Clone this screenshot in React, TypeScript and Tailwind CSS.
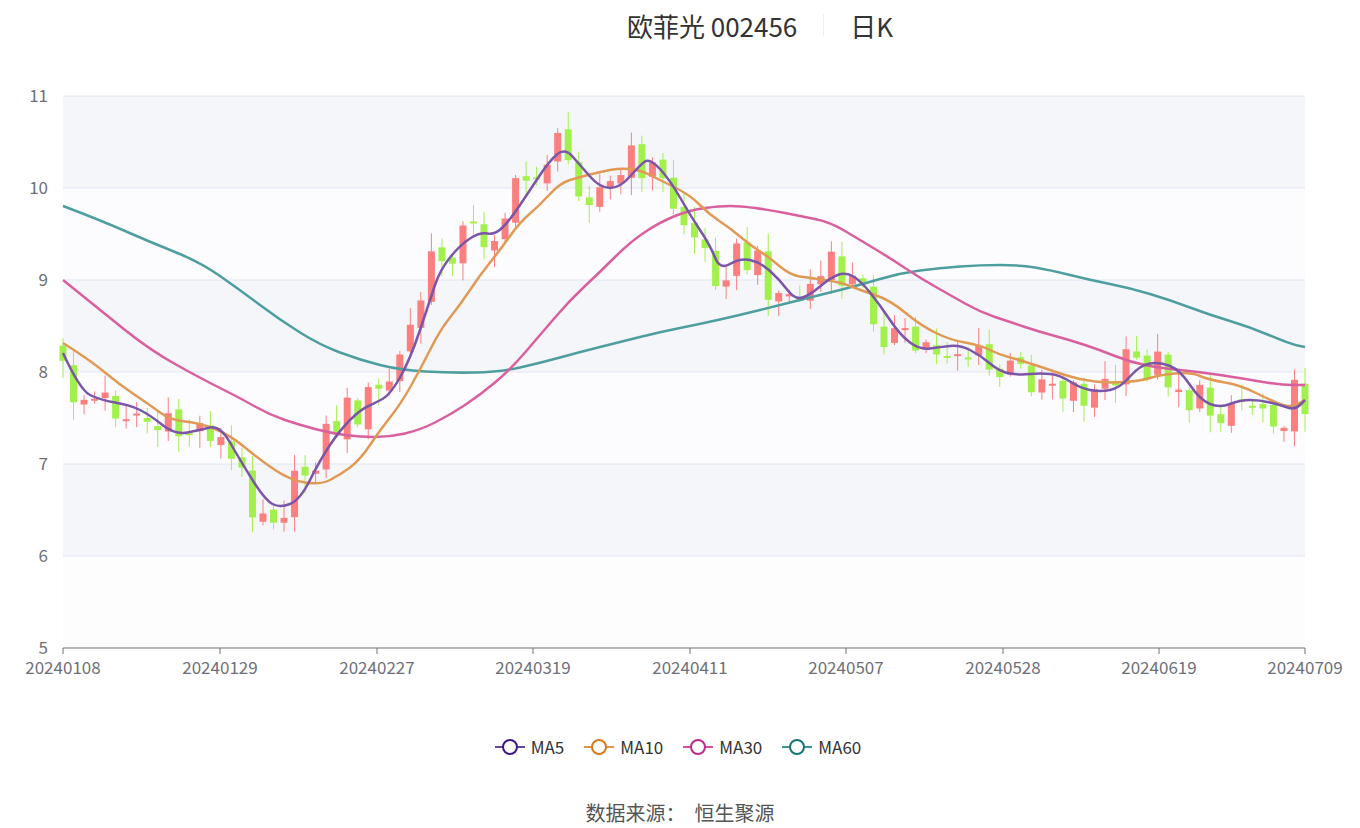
import React from "react";

type P = [number, number];
const ma5: P[] = [[63,353],[80,390],[100,400],[130,405],[150,415],[175,435],[200,430],[220,425],[240,460],[265,500],[280,508],[300,500],[320,460],[340,430],[360,410],[375,403],[390,395],[410,360],[430,300],[440,270],[460,245],[480,232],[495,235],[510,220],[530,190],[550,160],[565,148],[580,165],[600,188],[620,188],[640,165],[650,158],[670,180],[690,215],[710,245],[720,270],[740,258],[760,262],[780,280],[795,300],[810,295],[830,278],[845,272],[860,280],[880,305],[900,335],[920,350],[940,347],[960,345],[980,355],[1000,372],[1020,375],[1040,373],[1060,375],[1080,388],[1100,392],[1120,388],[1140,365],[1160,362],[1180,370],[1200,400],[1220,408],[1240,400],[1260,400],[1280,405],[1295,410],[1305,400]];
const ma10: P[] = [[63,343],[90,360],[120,385],[150,405],[170,420],[200,423],[230,435],[260,460],[290,480],[320,485],[340,475],[360,460],[380,430],[400,405],[420,370],[440,330],[460,305],[480,275],[500,250],[520,222],[540,205],[560,183],[580,177],[600,172],[620,168],[640,170],[660,180],[690,195],[710,215],[730,228],[750,245],[770,258],[790,275],[810,278],[840,282],[860,290],[890,300],[920,325],[950,340],[980,345],[1000,355],[1020,360],[1050,370],[1080,380],[1110,383],[1140,381],[1160,375],[1190,372],[1210,380],[1240,385],[1270,400],[1290,408],[1305,400]];
const ma30: P[] = [[63,280],[100,310],[150,350],[200,378],[240,398],[270,415],[300,425],[330,433],[360,437],[390,437],[420,430],[450,415],[480,395],[510,370],[540,335],[570,300],[600,272],[630,242],[660,222],[690,210],[720,206],[740,206],[770,210],[800,216],[830,222],[860,240],[890,258],[920,278],[950,295],[980,312],[1010,322],[1040,332],[1070,340],[1100,350],[1130,362],[1160,368],[1200,372],[1240,378],[1280,385],[1305,385]];
const ma60: P[] = [[63,206],[100,220],[150,242],[200,262],[240,290],[280,320],[320,345],[360,360],[400,370],[450,373],[500,372],[540,363],[580,352],[620,342],[660,332],[700,324],[740,315],[780,305],[820,295],[860,285],[900,273],[940,268],[980,265],[1020,265],[1050,270],[1090,280],[1130,288],[1170,300],[1210,315],[1250,327],[1290,344],[1305,347]];

function smooth(pts: P[]) {
  let d = `M${pts[0][0]},${pts[0][1]}`;
  for (let i = 1; i < pts.length - 1; i++) {
    const mx = (pts[i][0] + pts[i + 1][0]) / 2, my = (pts[i][1] + pts[i + 1][1]) / 2;
    d += ` Q${pts[i][0]},${pts[i][1]} ${mx},${my}`;
  }
  const l = pts[pts.length - 1];
  return d + ` L${l[0]},${l[1]}`;
}
function interp(pts: P[], x: number) {
  for (let i = 0; i < pts.length - 1; i++) {
    if (x <= pts[i + 1][0]) {
      const t = (x - pts[i][0]) / (pts[i + 1][0] - pts[i][0]);
      return pts[i][1] + t * (pts[i + 1][1] - pts[i][1]);
    }
  }
  return pts[pts.length - 1][1];
}
function rnd(i: number) {
  const s = Math.sin(i * 12.9898 + 78.233) * 43758.5453;
  return s - Math.floor(s);
}

const N = 119;
const step = 1242 / (N - 1);
const candles: { x: number; o: number; c: number; h: number; l: number }[] = [];
let prev = 345;
for (let i = 0; i < N; i++) {
  const x = 63 + i * step;
  const base = interp(ma5, Math.min(1305, x + 10));
  const c = base + (rnd(i) - 0.5) * 44;
  const o = prev + (rnd(i + 300) - 0.5) * 10;
  const h = Math.min(o, c) - rnd(i + 500) * 16 - 2;
  const l = Math.max(o, c) + rnd(i + 700) * 16 + 2;
  candles.push({ x, o, c, h, l });
  prev = c;
}

const labels = ["20240108","20240129","20240227","20240319","20240411","20240507","20240528","20240619","20240709"];
const lx = [63, 220, 377, 533, 690, 846, 1003, 1159, 1305];

export default function App() {
  const font = { fontFamily: '"Noto Sans CJK SC", "Noto Sans", sans-serif' };
  return (
    <div className="w-[1360px] h-[828px] bg-white relative" style={font}>
      <div className="flex justify-center items-center pt-[6px] pl-[160px] h-[44px] text-[26px] text-[#333]">
        <span>欧菲光 002456</span>
        <span className="mx-[26px] w-px h-[22px] bg-[#eee]" />
        <span>日K</span>
      </div>
      <svg width="1360" height="690" className="block" viewBox="0 44 1360 690">
        {[0, 1, 2, 3, 4].map((k) => (
          <rect key={k} x={63} y={96 + k * 92} width={1242} height={92} fill={k % 2 === 0 ? "#f5f6fa" : "#fcfcfe"} />
        ))}
        <rect x={63} y={556} width={1242} height={92} fill="#fdfdfe" />
        {[0, 1, 2, 3, 4, 5].map((k) => (
          <line key={k} x1={63} x2={1305} y1={96 + k * 92} y2={96 + k * 92} stroke="#e0e6f1" />
        ))}
        {[11, 10, 9, 8, 7, 6, 5].map((v, k) => (
          <text key={v} x={48} y={102 + k * 92} textAnchor="end" fontSize={17} fill="#6e7079">{v}</text>
        ))}
        {candles.map((d, i) => {
          const up = d.c < d.o;
          const col = up ? "#fb7f7f" : "#a2f04c";
          const top = Math.min(d.o, d.c), hgt = Math.max(2, Math.abs(d.o - d.c));
          return (
            <g key={i}>
              <line x1={d.x} x2={d.x} y1={d.h} y2={d.l} stroke={col} strokeWidth={1} />
              <rect x={d.x - 3.5} y={top} width={7} height={hgt} fill={col} />
            </g>
          );
        })}
        <path d={smooth(ma60)} fill="none" stroke="#4f9e9f" strokeWidth={2.5} />
        <path d={smooth(ma30)} fill="none" stroke="#d9609f" strokeWidth={2.5} />
        <path d={smooth(ma10)} fill="none" stroke="#e09a55" strokeWidth={2.5} />
        <path d={smooth(ma5)} fill="none" stroke="#7a55a8" strokeWidth={2.5} />
        <line x1={63} x2={1305} y1={648} y2={648} stroke="#6e7079" />
        {lx.map((x, k) => (
          <g key={k}>
            <line x1={x} x2={x} y1={648} y2={654} stroke="#6e7079" />
            <text x={x} y={674} textAnchor="middle" fontSize={17} fill="#6e7079">{labels[k]}</text>
          </g>
        ))}
      </svg>
      <div className="flex justify-center gap-[20px] text-[17px] text-[#333] h-[26px] items-center pr-[4px]">
        {[["MA5", "#3d1a87"], ["MA10", "#d97a1a"], ["MA30", "#c0288a"], ["MA60", "#167475"]].map(([n, c]) => (
          <div key={n} className="flex items-center gap-[6px]">
            <svg width="30" height="20">
              <line x1="0" x2="30" y1="10" y2="10" stroke={c} strokeWidth="2" opacity="0.8" />
              <circle cx="15" cy="10" r="7" fill="white" stroke={c} strokeWidth="2" />
            </svg>
            <span>{n}</span>
          </div>
        ))}
      </div>
      <div className="text-center text-[20px] text-[#555] mt-[38px] pr-[epx]">数据来源：&nbsp;&nbsp;恒生聚源</div>
    </div>
  );
}
